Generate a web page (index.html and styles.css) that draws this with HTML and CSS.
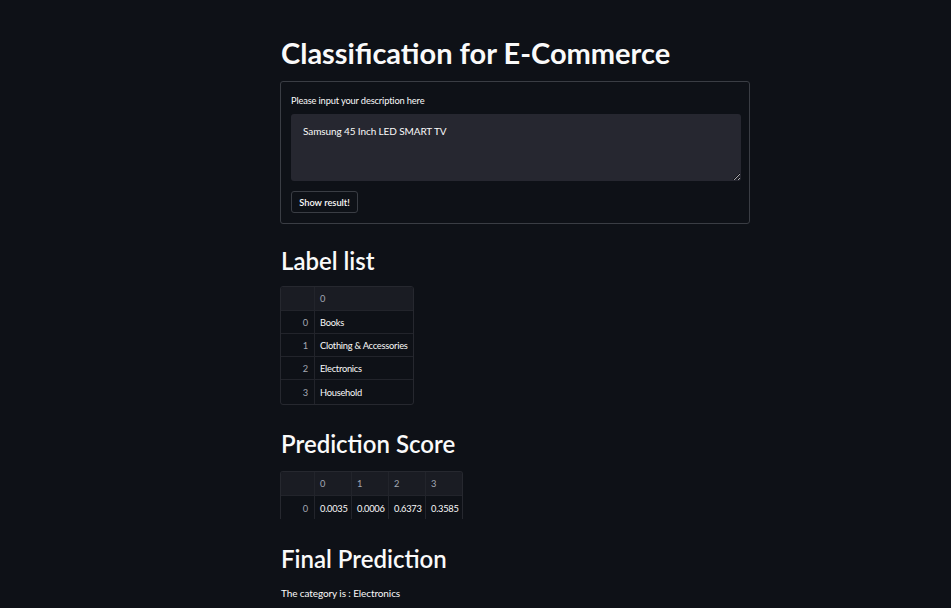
FILE: index.html
```html
<!DOCTYPE html>
<html lang="en">
<head>
<meta charset="utf-8">
<title>Classification for E-Commerce</title>
<link rel="stylesheet" href="styles.css">
</head>
<body>
<main class="main">
  <h1 class="title">Classification for E-Commerce</h1>
  <form class="form">
    <label class="label" for="desc">Please input your description here</label>
    <div class="textarea-wrap">
      <textarea id="desc" class="textarea">Samsung 45 Inch LED SMART TV</textarea>
    </div>
    <button type="button" class="btn">Show result!</button>
  </form>

  <h2 class="heading">Label list</h2>
  <div class="table-box labels">
    <div class="row head">
      <div class="cell idx"></div>
      <div class="cell wide">0</div>
    </div>
    <div class="row">
      <div class="cell idx">0</div>
      <div class="cell wide">Books</div>
    </div>
    <div class="row">
      <div class="cell idx">1</div>
      <div class="cell wide">Clothing &amp; Accessories</div>
    </div>
    <div class="row">
      <div class="cell idx">2</div>
      <div class="cell wide">Electronics</div>
    </div>
    <div class="row last">
      <div class="cell idx">3</div>
      <div class="cell wide">Household</div>
    </div>
  </div>

  <h2 class="heading">Prediction Score</h2>
  <div class="table-box scores">
    <div class="row head">
      <div class="cell idx"></div>
      <div class="cell num">0</div>
      <div class="cell num">1</div>
      <div class="cell num">2</div>
      <div class="cell num">3</div>
    </div>
    <div class="row last">
      <div class="cell idx">0</div>
      <div class="cell num">0.0035</div>
      <div class="cell num">0.0006</div>
      <div class="cell num">0.6373</div>
      <div class="cell num">0.3585</div>
    </div>
  </div>

  <h2 class="heading">Final Prediction</h2>
  <p class="text">The category is : Electronics</p>
</main>
</body>
</html>
```

FILE: styles.css
```css
html, body {
  margin: 0;
  padding: 0;
  background: #0e1117;
}
body {
  color: #fafafa;
  font-family: "Source Sans Pro", Lato, "Noto Sans", sans-serif;
  width: 951px;
  height: 608px;
  overflow: hidden;
}
.main {
  width: 470px;
  margin-left: 280px;
  padding-top: 35px;
}
.title {
  margin: 0;
  font-size: 29px;
  line-height: 36px;
  font-weight: 700;
  padding-left: 1px;
}
.form {
  margin-top: 10px;
  height: 143px;
  box-sizing: border-box;
  border: 1px solid #3a3d44;
  border-radius: 3px;
  padding: 12px 8px 10px 10px;
  display: flex;
  flex-direction: column;
}
.label {
  font-size: 9.3px;
  line-height: 14px;
  color: #fafafa;
  height: 14px;
  margin-bottom: 6px;
  letter-spacing: -0.15px;
}
.textarea-wrap {
  height: 68px;
  width: 450px;
}
.textarea {
  display: block;
  width: 100%;
  height: 100%;
  box-sizing: border-box;
  background: #262730;
  border: none;
  border-radius: 3px;
  color: #fafafa;
  font-family: inherit;
  font-size: 10px;
  letter-spacing: -0.1px;
  line-height: 16px;
  padding: 9px 12px;
  resize: vertical;
  outline: none;
}
.btn {
  margin-top: 10px;
  align-self: flex-start;
  width: 67px;
  height: 22px;
  background: #0e1117;
  border: 1px solid #3a3d44;
  border-radius: 3px;
  color: #fafafa;
  font-family: inherit;
  font-size: 9.3px;
  font-weight: 600;
  padding: 0;
}
.heading {
  margin: 0;
  font-size: 24px;
  font-weight: 600;
  line-height: 30px;
  padding-left: 1px;
}
.form + .heading {
  margin-top: 22px;
}
.table-box {
  margin-top: 10px;
  border: 1px solid #26282f;
  border-radius: 3px;
  box-sizing: border-box;
  overflow: hidden;
  font-size: 9.3px;
}
.labels {
  width: 134px;
}
.scores {
  margin-top: 12px;
  width: 183px;
  height: 48px;
  border-bottom: none;
  border-radius: 3px 3px 0 0;
}
.labels + .heading {
  margin-top: 24px;
}
.scores + .heading {
  margin-top: 25px;
}
.row {
  display: flex;
  box-sizing: border-box;
  height: 23px;
  border-bottom: 1px solid #22242b;
}
.row.head {
  height: 24px;
  background: #1a1c23;
  color: #a3a8b4;
}
.row.last {
  border-bottom: none;
  height: 24px;
}
.cell {
  box-sizing: border-box;
  display: flex;
  align-items: center;
  padding: 0 5px;
  border-right: 1px solid #22242b;
  white-space: nowrap;
  flex-shrink: 0;
  letter-spacing: -0.25px;
}
.cell:last-child {
  border-right: none;
}
.cell.idx {
  width: 34px;
  justify-content: flex-end;
  color: #a3a8b4;
  padding-right: 6px;
}
.cell.wide {
  flex: 1 1 auto;
  padding-right: 0;
}
.cell.num {
  width: 37px;
}
.row.head .cell {
  color: #a3a8b4;
}
.text {
  margin: 11px 0 0;
  font-size: 10px;
  letter-spacing: -0.1px;
  line-height: 16px;
  padding-left: 1px;
}
```
